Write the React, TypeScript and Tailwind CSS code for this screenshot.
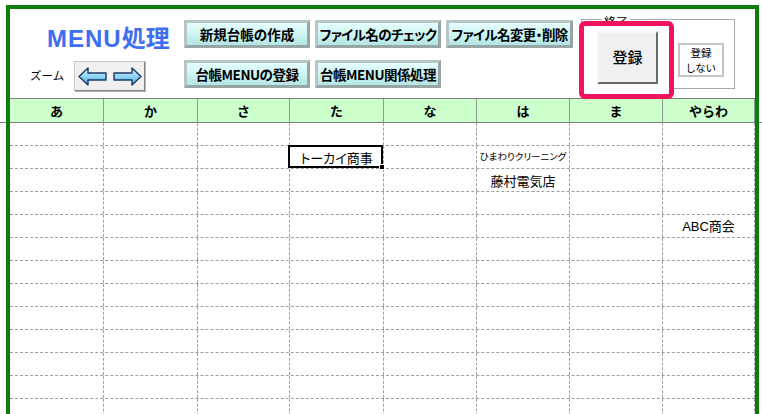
import React from 'react';

const COLS = ['あ', 'か', 'さ', 'た', 'な', 'は', 'ま', 'やらわ'];
const GRID = 'grid grid-cols-[94px_94px_92px_94px_93px_93px_93px_92px]';

type Entry = { text: string; size: string; selected?: boolean; latin?: boolean };

// row index -> column index -> entry
const DATA: Record<number, Record<number, Entry>> = {
  1: {
    3: { text: 'トーカイ商事', size: 'text-[13px]', selected: true },
    5: { text: 'ひまわりクリーニング', size: 'text-[9.5px]' },
  },
  2: { 5: { text: '藤村電気店', size: 'text-[13px]' } },
  4: { 7: { text: 'ABC商会', size: 'text-[13px]', latin: true } },
};

function MenuButton({ label }: { label: string }) {
  return (
    <div className="flex h-[28px] items-center justify-center whitespace-nowrap border-[3px] border-t-[#b9c6c6] border-l-[#b9c6c6] border-r-[#97a5a5] border-b-[#97a5a5] bg-linear-to-b from-[#e6fefd] via-[#cdf5f3] to-[#b3e5e4] text-[13.5px] font-bold text-black [font-feature-settings:'palt']">
      {label}
    </div>
  );
}

function ZoomArrows() {
  return (
    <svg width="64" height="19" viewBox="0 0 64 19">
      <defs>
        <linearGradient id="arr" x1="0" y1="0" x2="0" y2="1">
          <stop offset="0" stopColor="#e4f6ff" />
          <stop offset="0.5" stopColor="#8fd3f6" />
          <stop offset="1" stopColor="#4aa9dd" />
        </linearGradient>
      </defs>
      <polygon
        points="1,9.5 10,1 10,6 28,6 28,13 10,13 10,18"
        fill="url(#arr)"
        stroke="#1c3a66"
        strokeWidth="1.4"
        strokeLinejoin="round"
      />
      <polygon
        points="63,9.5 54,1 54,6 36,6 36,13 54,13 54,18"
        fill="url(#arr)"
        stroke="#1c3a66"
        strokeWidth="1.4"
        strokeLinejoin="round"
      />
    </svg>
  );
}

export default function App() {
  const rows = Array.from({ length: 13 }, (_, i) => i);

  return (
    <div className="relative h-[414px] w-[762px] overflow-hidden bg-white font-['Noto_Sans_CJK_JP',sans-serif] text-black">
      {/* frozen pane line running past the sheet frame */}
      <div className="absolute left-0 right-0 top-[122px] h-px bg-[#808080]" />

      <div className="relative ml-[6px] mt-[5px] h-[420px] w-[753px] border-4 border-[#0c7c0c] bg-white">
        {/* top controls */}
        <div className="relative flex h-[89px]">
          <div className="w-[174px] shrink-0">
            <div className="pl-[37px] pt-[16px] font-['Liberation_Sans','Noto_Sans_CJK_JP',sans-serif] text-[24px] font-bold leading-[28px] text-[#3e6ef1]">
              <span className="tracking-[1px]">MENU</span>処理
            </div>
            <div className="mt-[8px] flex h-[30px] items-center pl-[20px]">
              <span className="w-[44px] text-[11.5px] leading-none">ズーム</span>
              <div className="flex h-[30px] w-[71px] items-center justify-center border border-t-[#c8c8c8] border-l-[#c8c8c8] border-r-[#8a8a8a] border-b-[#8a8a8a] bg-[#f0f0f0] shadow-[1px_1px_0_#b0b0b0]">
                <ZoomArrows />
              </div>
            </div>
          </div>

          <div className="grid grid-cols-[126px_126px_127px] gap-x-[5px] gap-y-[12px] self-start pt-[11px]">
            <MenuButton label="新規台帳の作成" />
            <div className="tracking-[-0.6px]">
              <MenuButton label="ファイル名のチェック" />
            </div>
            <div className="tracking-[-0.6px]">
              <MenuButton label="ファイル名変更・削除" />
            </div>
            <div className="tracking-[-0.5px]">
              <MenuButton label="台帳MENUの登録" />
            </div>
            <div className="tracking-[-0.5px]">
              <MenuButton label="台帳MENU関係処理" />
            </div>
          </div>

          {/* 終了 group */}
          <div className="relative ml-[8px] mt-[10px] flex h-[70px] w-[154px] items-start justify-end border border-[#a8a8a8] pr-[10px] pt-[23px]">
            <span className="absolute -top-[5px] left-[20px] bg-white px-[2px] text-[12px] leading-[14px]">終了</span>
            <div className="flex h-[34px] w-[46px] items-center justify-center border-2 border-[#c4c4c4] bg-white text-center text-[10.5px] leading-[15px] [font-feature-settings:'palt']">
              <span>
                登録
                <br />
                しない
              </span>
            </div>
          </div>

          {/* highlight around 登録 */}
          <div className="absolute left-[569px] top-[12px] z-10 h-[78px] w-[95px] rounded-[6px] border-[5px] border-[#f0155b] bg-white">
            <div className="ml-[13px] mt-[5px] flex h-[53px] w-[61px] items-center justify-center border-2 border-t-[#f8f8f8] border-l-[#f8f8f8] border-r-[#6a6a6a] border-b-[#6a6a6a] bg-[#f0f0f0] text-[15px] font-medium">
              登録
            </div>
          </div>
        </div>

        {/* header */}
        <div className={`${GRID} h-[25px] border-y border-[#808080] bg-[#ccffcc]`}>
          {COLS.map((c) => (
            <div key={c} className="flex items-center justify-center border-r border-[#8e9e8e] text-[13px] font-bold">
              {c}
            </div>
          ))}
        </div>

        {/* body */}
        {rows.map((r) => (
          <div key={r} className={`${GRID} h-[23px] border-b border-dashed border-[#a0a0a0]`}>
            {COLS.map((c, ci) => {
              const e = DATA[r]?.[ci];
              return (
                <div key={c} className="relative flex items-center justify-center border-r border-dashed border-[#a0a0a0]">
                  {e && (
                    <span
                      className={`${e.size} whitespace-nowrap leading-none [font-feature-settings:'palt'] ${
                        e.latin ? "font-['Liberation_Sans','Noto_Sans_CJK_JP',sans-serif]" : ''
                      }`}
                    >
                      {e.text}
                    </span>
                  )}
                  {e?.selected && (
                    <div className="absolute -left-[2px] -top-px bottom-0 right-0 z-10 border-2 border-black">
                      <div className="absolute -bottom-[4px] -right-[4px] h-[6px] w-[6px] border border-white bg-black" />
                    </div>
                  )}
                </div>
              );
            })}
          </div>
        ))}
      </div>
    </div>
  );
}
